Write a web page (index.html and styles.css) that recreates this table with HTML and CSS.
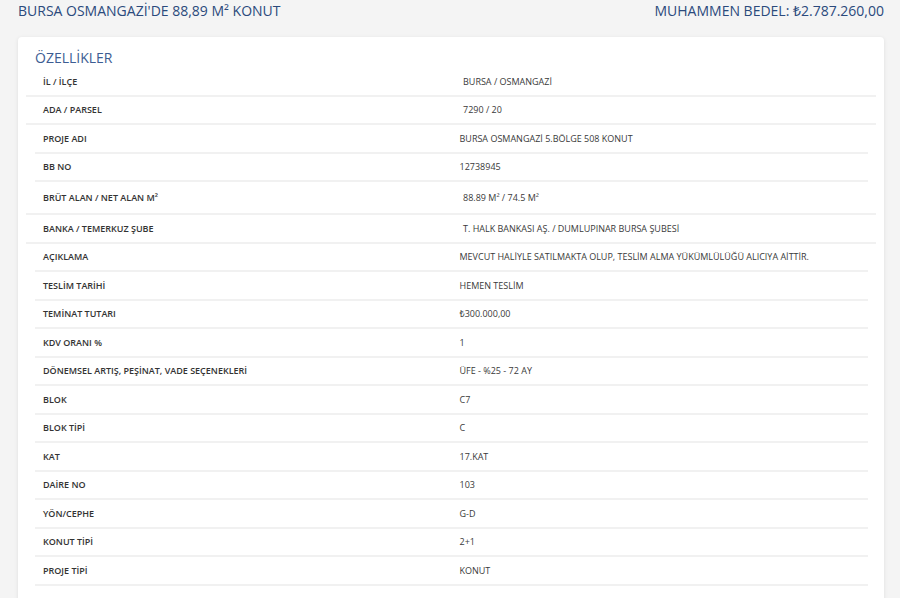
FILE: index.html
```html
<!DOCTYPE html>
<html lang="tr">
<head>
<meta charset="utf-8">
<title>Bursa Osmangazi Konut</title>
<link rel="stylesheet" href="styles.css">
</head>
<body>
<header class="top">
  <h1 class="top-title">BURSA OSMANGAZİ'DE 88,89 M² KONUT</h1>
  <div class="top-price">MUHAMMEN BEDEL: ₺2.787.260,00</div>
</header>
<section class="card">
  <h2 class="card-title">ÖZELLİKLER</h2>
  <div class="rows">
    <div class="row row-a"><div class="cell label">İL / İLÇE</div><div class="cell value">BURSA / OSMANGAZİ</div></div>
    <div class="row row-a"><div class="cell label">ADA / PARSEL</div><div class="cell value">7290 / 20</div></div>
    <div class="row row-b"><div class="cell label">PROJE ADI</div><div class="cell value">BURSA OSMANGAZİ 5.BÖLGE 508 KONUT</div></div>
    <div class="row row-b"><div class="cell label">BB NO</div><div class="cell value">12738945</div></div>
    <div class="row row-a row-tall"><div class="cell label">BRÜT ALAN / NET ALAN M²</div><div class="cell value">88.89 M² / 74.5 M²</div></div>
    <div class="row row-a"><div class="cell label">BANKA / TEMERKUZ ŞUBE</div><div class="cell value">T. HALK BANKASI AŞ. / DUMLUPINAR BURSA ŞUBESİ</div></div>
    <div class="row row-b"><div class="cell label">AÇIKLAMA</div><div class="cell value">MEVCUT HALİYLE SATILMAKTA OLUP, TESLİM ALMA YÜKÜMLÜLÜĞÜ ALICIYA AİTTİR.</div></div>
    <div class="row row-b"><div class="cell label">TESLİM TARİHİ</div><div class="cell value">HEMEN TESLİM</div></div>
    <div class="row row-b"><div class="cell label">TEMİNAT TUTARI</div><div class="cell value">₺300.000,00</div></div>
    <div class="row row-b"><div class="cell label">KDV ORANI %</div><div class="cell value">1</div></div>
    <div class="row row-b"><div class="cell label">DÖNEMSEL ARTIŞ, PEŞİNAT, VADE SEÇENEKLERİ</div><div class="cell value">ÜFE - %25 - 72 AY</div></div>
    <div class="row row-b"><div class="cell label">BLOK</div><div class="cell value">C7</div></div>
    <div class="row row-b"><div class="cell label">BLOK TİPİ</div><div class="cell value">C</div></div>
    <div class="row row-b"><div class="cell label">KAT</div><div class="cell value">17.KAT</div></div>
    <div class="row row-b"><div class="cell label">DAİRE NO</div><div class="cell value">103</div></div>
    <div class="row row-b"><div class="cell label">YÖN/CEPHE</div><div class="cell value">G-D</div></div>
    <div class="row row-b"><div class="cell label">KONUT TİPİ</div><div class="cell value">2+1</div></div>
    <div class="row row-b"><div class="cell label">PROJE TİPİ</div><div class="cell value">KONUT</div></div>
  </div>
</section>
</body>
</html>
```

FILE: styles.css
```css
* { box-sizing: border-box; }

html, body {
  margin: 0;
  padding: 0;
  background: #f4f4f4;
  font-family: "Open Sans", "Noto Sans", "DejaVu Sans", sans-serif;
  color: #333;
}

.top {
  display: flex;
  justify-content: space-between;
  align-items: center;
  padding: 1px 16px 0 18px;
  margin-bottom: 16px;
}

.top-title,
.top-price {
  margin: 0;
  font-size: 14px;
  font-weight: 400;
  line-height: 20px;
  color: #2b4a7c;
}

.card {
  margin: 0 16px 0 18px;
  background: #fff;
  border-radius: 4px;
  box-shadow: 0 1px 4px rgba(0, 0, 0, 0.09);
  padding: 11px 8px 24px 8px;
}

.card-title {
  margin: 0;
  padding-left: 9px;
  font-size: 14px;
  font-weight: 400;
  line-height: 20px;
  color: #3d5d93;
}

.rows {
  display: flex;
  flex-direction: column;
}

.row {
  display: flex;
  align-items: center;
  height: 28.5px;
  padding-top: 1px;
  border-bottom: 2px solid #f1f1f1;
  font-size: 9px;
  line-height: 12px;
}

.row-b {
  margin: 0 8px 0 9px;
}

.row-tall {
  height: 33px;
}

.cell {
  flex: 1 1 50%;
  min-width: 0;
  white-space: nowrap;
}

.row-a .cell { padding: 0 12px; }
.row-a .cell.label { padding-left: 17px; }
.row-b .cell { padding: 0 8px; }

.label {
  font-weight: 600;
  color: #333;
}

.value {
  font-weight: 400;
  color: #3a3a3a;
}
```
